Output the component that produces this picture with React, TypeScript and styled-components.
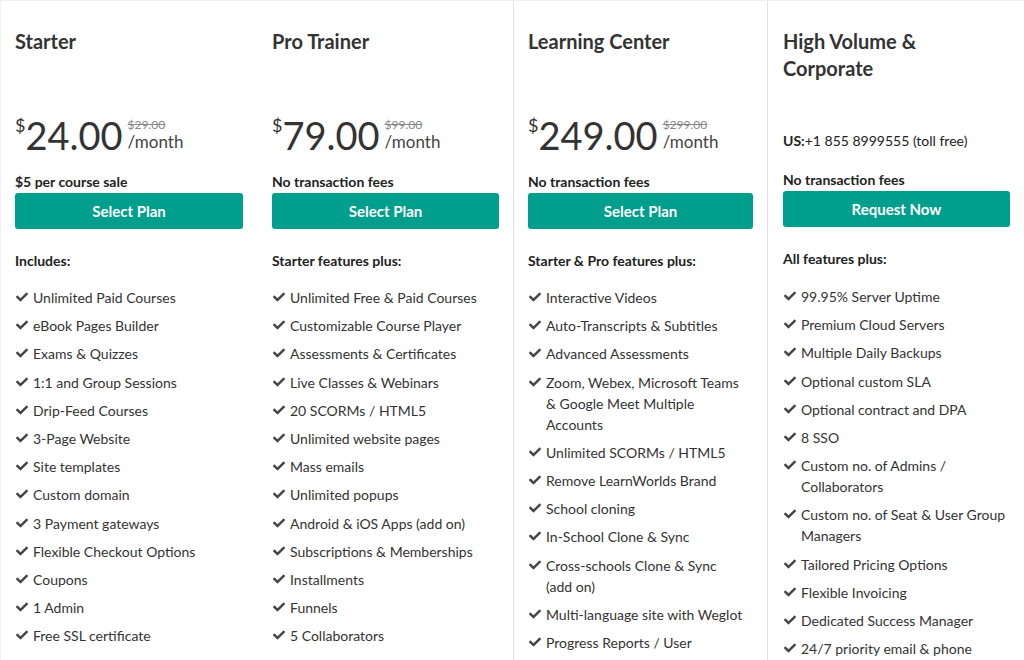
import React from "react";
import styled, { createGlobalStyle } from "styled-components";
import { FaCheck } from "react-icons/fa";

const Global = createGlobalStyle`
  html, body { margin: 0; padding: 0; background: #fff; }
  body { font-family: Lato, "Noto Sans", "Liberation Sans", sans-serif; color: #333; overflow: hidden; }
  #root { width: 1024px; height: 660px; overflow: hidden; }
`;

const Grid = styled.div`
  display: grid;
  grid-template-columns: 257px 256px 255px 256px;
  border-top: 1px solid #efefef;
  height: 659px;
  overflow: hidden;
`;

const Card = styled.div<{ $featured?: boolean; $first?: boolean }>`
  display: flex;
  flex-direction: column;
  padding: 27px 13px 0 14px;
  box-sizing: border-box;
  border-left: 1px solid ${(p) => (p.$featured ? "#e2e2e2" : p.$first ? "#f2f2f2" : "transparent")};
  border-right: 1px solid ${(p) => (p.$featured ? "#e2e2e2" : "transparent")};
  ${(p) => (p.$featured ? "padding-right: 14px;" : "")}
`;

const Title = styled.h2`
  margin: 0;
  font-size: 20px;
  line-height: 27px;
  font-weight: 700;
  color: #333;
  min-height: 54px;
  white-space: pre-line;
`;

const PriceArea = styled.div<{ $pad: number; $h: number }>`
  height: ${(p) => p.$h}px;
  display: flex;
  align-items: flex-end;
  padding-bottom: ${(p) => p.$pad}px;
  box-sizing: border-box;
`;

const PriceRow = styled.div`
  display: flex;
  align-items: flex-start;
`;

const Currency = styled.span`
  font-size: 18px;
  line-height: 18px;
  margin-top: 3px;
  color: #333;
`;

const Amount = styled.span`
  font-size: 38px;
  line-height: 44px;
  font-weight: 400;
  color: #333;
`;

const PriceSide = styled.div`
  display: flex;
  flex-direction: column;
  margin-left: 5px;
  margin-top: 5px;
`;

const OldPrice = styled.span`
  font-size: 12px;
  line-height: 14px;
  color: #888;
  text-decoration: line-through;
`;

const Per = styled.span`
  font-size: 17px;
  line-height: 20px;
  color: #444;
`;

const Phone = styled.div`
  font-size: 14px;
  line-height: 20px;
  color: #222;
  b { font-weight: 700; }
`;

const Note = styled.div`
  font-size: 14px;
  line-height: 20px;
  font-weight: 700;
  color: #222;
`;

const Button = styled.button`
  margin-top: 1px;
  height: 36px;
  width: 100%;
  border: none;
  border-radius: 3px;
  background: #009e8c;
  color: #fff;
  font-family: inherit;
  font-size: 15px;
  font-weight: 700;
  cursor: pointer;
`;

const Label = styled.div`
  margin-top: 22px;
  font-size: 14px;
  line-height: 20px;
  font-weight: 700;
  color: #222;
`;

const List = styled.ul<{ $offset: number }>`
  list-style: none;
  margin: ${(p) => p.$offset}px 0 0;
  padding: 0;
  display: flex;
  flex-direction: column;
  gap: 7.2px;
`;

const Item = styled.li`
  display: flex;
  align-items: flex-start;
  font-size: 14px;
  line-height: 21px;
  color: #333;
  white-space: pre-line;
  svg {
    flex: none;
    width: 12px;
    height: 12px;
    margin: 4px 5px 0 1px;
    color: #444;
  }
`;

type Plan = {
  title: string;
  price?: { amount: string; old: string };
  phone?: boolean;
  note: string;
  button: string;
  label: string;
  items: string[];
  featured?: boolean;
};

const plans: Plan[] = [
  {
    title: "Starter",
    price: { amount: "24.00", old: "$29.00" },
    note: "$5 per course sale",
    button: "Select Plan",
    label: "Includes:",
    items: [
      "Unlimited Paid Courses",
      "eBook Pages Builder",
      "Exams & Quizzes",
      "1:1 and Group Sessions",
      "Drip-Feed Courses",
      "3-Page Website",
      "Site templates",
      "Custom domain",
      "3 Payment gateways",
      "Flexible Checkout Options",
      "Coupons",
      "1 Admin",
      "Free SSL certificate",
    ],
  },
  {
    title: "Pro Trainer",
    price: { amount: "79.00", old: "$99.00" },
    note: "No transaction fees",
    button: "Select Plan",
    label: "Starter features plus:",
    items: [
      "Unlimited Free & Paid Courses",
      "Customizable Course Player",
      "Assessments & Certificates",
      "Live Classes & Webinars",
      "20 SCORMs / HTML5",
      "Unlimited website pages",
      "Mass emails",
      "Unlimited popups",
      "Android & iOS Apps (add on)",
      "Subscriptions & Memberships",
      "Installments",
      "Funnels",
      "5 Collaborators",
    ],
  },
  {
    title: "Learning Center",
    price: { amount: "249.00", old: "$299.00" },
    note: "No transaction fees",
    button: "Select Plan",
    label: "Starter & Pro features plus:",
    featured: true,
    items: [
      "Interactive Videos",
      "Auto-Transcripts & Subtitles",
      "Advanced Assessments",
      "Zoom, Webex, Microsoft Teams\n& Google Meet Multiple\nAccounts",
      "Unlimited SCORMs / HTML5",
      "Remove LearnWorlds Brand",
      "School cloning",
      "In-School Clone & Sync",
      "Cross-schools Clone & Sync\n(add on)",
      "Multi-language site with Weglot",
      "Progress Reports / User",
    ],
  },
  {
    title: "High Volume &\nCorporate",
    phone: true,
    note: "No transaction fees",
    button: "Request Now",
    label: "All features plus:",
    items: [
      "99.95% Server Uptime",
      "Premium Cloud Servers",
      "Multiple Daily Backups",
      "Optional custom SLA",
      "Optional contract and DPA",
      "8 SSO",
      "Custom no. of Admins /\nCollaborators",
      "Custom no. of Seat & User Group\nManagers",
      "Tailored Pricing Options",
      "Flexible Invoicing",
      "Dedicated Success Manager",
      "24/7 priority email & phone",
    ],
  },
];

export default function App() {
  return (
    <>
      <Global />
      <Grid>
        {plans.map((p, i) => (
          <Card key={p.title} $featured={p.featured} $first={i === 0}>
            <Title>{p.title}</Title>
            <PriceArea $h={p.phone ? 88 : 90} $pad={p.phone ? 19 : 15}>
              {p.price ? (
                <PriceRow>
                  <Currency>$</Currency>
                  <Amount>{p.price.amount}</Amount>
                  <PriceSide>
                    <OldPrice>{p.price.old}</OldPrice>
                    <Per>/month</Per>
                  </PriceSide>
                </PriceRow>
              ) : (
                <Phone>
                  <b>US:</b>+1 855 8999555 (toll free)
                </Phone>
              )}
            </PriceArea>
            <Note>{p.note}</Note>
            <Button>{p.button}</Button>
            <Label>{p.label}</Label>
            <List $offset={p.phone ? 17 : 16}>
              {p.items.map((t) => (
                <Item key={t}>
                  <FaCheck />
                  <span>{t}</span>
                </Item>
              ))}
            </List>
          </Card>
        ))}
      </Grid>
    </>
  );
}
